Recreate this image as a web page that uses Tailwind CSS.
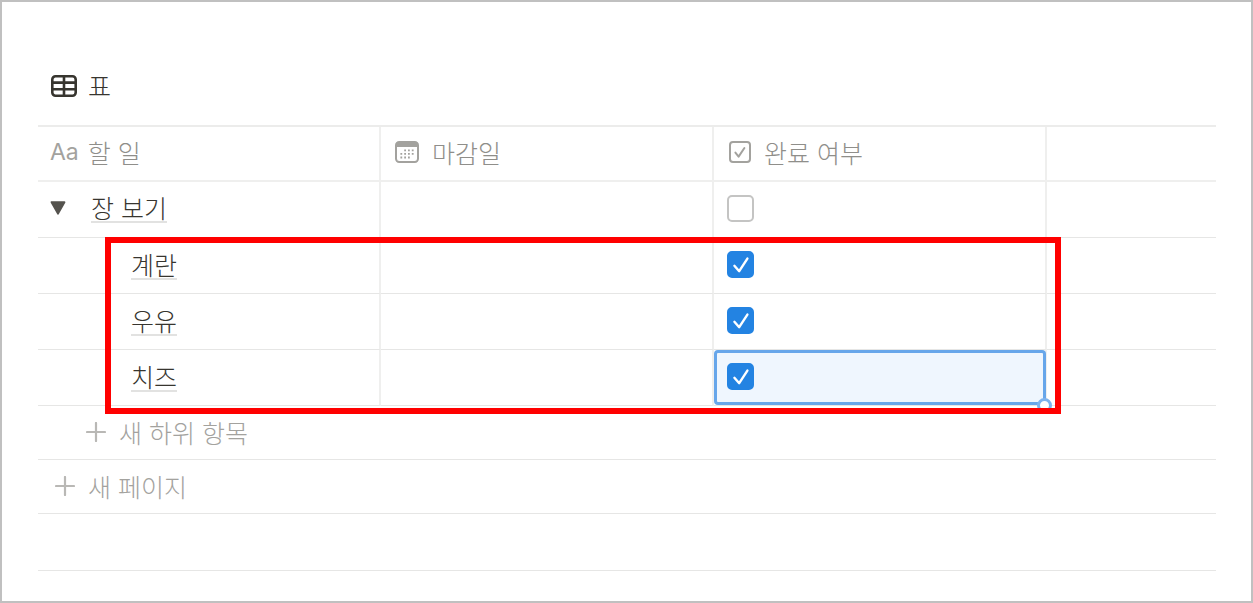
<!DOCTYPE html>
<html lang="ko">
<head>
    <meta charset="UTF-8">
    <meta name="viewport" content="width=device-width, initial-scale=1.0">
    <title>표</title>
    <script src="https://cdn.jsdelivr.net/npm/@tailwindcss/browser@4"></script>
</head>

<body class="bg-white font-['Noto_Sans_CJK_KR',sans-serif] text-[25px] leading-[28px] font-light text-[#37352f]">

    <main class="min-h-screen border-2 border-[#c0c0c0] pl-9 pr-[35px] pt-[69px] pb-6">

        <!--View title-->
        <div class="flex items-center gap-[11px] pl-[13px] h-[30px] mb-6">
            <svg class="w-[26px] h-[22px]" viewBox="0 0 26 22" fill="none" stroke="#37352f" stroke-width="2.6">
                <rect x="1.3" y="1.3" width="23.4" height="19.4" rx="3.2"/>
                <path d="M1 7.6h24M1 14.2h24M13 1v20"/>
            </svg>
            <h1 class="pb-0.5">표</h1>
        </div>

        <div class="relative">
            <table class="w-full table-fixed border-separate border-spacing-0 border-t-2 border-[#ececeb]">
                <colgroup>
                    <col class="w-[343px]">
                    <col class="w-[333px]">
                    <col class="w-[333px]">
                    <col>
                </colgroup>
                <thead class="text-left text-[#8f8e8a]">
                    <tr class="h-[55px]">
                        <th class="border-b-2 border-r-2 border-[#efefee] p-0 pb-[3px] pl-3 font-light">
                            <div class="flex items-center gap-[9px]">
                                <span class="font-[Inter,sans-serif] font-normal text-[23px] text-[#a3a29e]">Aa</span>할 일
                            </div>
                        </th>
                        <th class="border-b-2 border-r-2 border-[#efefee] p-0 pb-[3px] pl-[14px] font-light">
                            <div class="flex items-center gap-[13px]">
                                <svg class="w-6 h-[22px]" viewBox="0 0 24 22" fill="none">
                                    <rect x="1" y="1" width="22" height="20" rx="3.2" stroke="#a3a29e" stroke-width="2"/>
                                    <path d="M1 6V4a3 3 0 0 1 3-3h16a3 3 0 0 1 3 3v2z" fill="#a3a29e"/>
                                    <path d="M9.2 9.3h9.8M5.4 12.9h13.6M5.4 16.5h9.8" stroke="#a3a29e" stroke-width="1.8" stroke-dasharray="1.8 2"/>
                                </svg>
                                마감일
                            </div>
                        </th>
                        <th class="border-b-2 border-r-2 border-[#efefee] p-0 pb-[3px] pl-[15px] font-light">
                            <div class="flex items-center gap-[13px]">
                                <svg class="w-[22px] h-[22px]" viewBox="0 0 22 22" fill="none" stroke="#a3a29e" stroke-width="2" stroke-linecap="round" stroke-linejoin="round">
                                    <rect x="1" y="1" width="20" height="20" rx="3"/>
                                    <path d="M6.4 11.6l3.2 4 5.8-8.6"/>
                                </svg>
                                완료 여부
                            </div>
                        </th>
                        <th class="border-b-2 border-[#efefee] p-0"></th>
                    </tr>
                </thead>
                <tbody>
                    <!--Parent item-->
                    <tr class="h-14">
                        <td class="border-b border-r-2 border-b-[#e6e6e5] border-r-[#efefee] p-0 pb-[3px] pl-3">
                            <div class="flex items-center gap-[25px]">
                                <button type="button" aria-label="하위 항목">
                                    <svg class="w-4 h-[14px]" viewBox="0 0 16 14" fill="#55534e" stroke="#55534e" stroke-width="2" stroke-linejoin="round"><path d="M1.6 1.2h12.8L8 12.6z"/></svg>
                                </button>
                                <span class="border-b-2 border-[#e2e2e1]">장 보기</span>
                            </div>
                        </td>
                        <td class="border-b border-r-2 border-b-[#e6e6e5] border-r-[#efefee] p-0"></td>
                        <td class="border-b border-r-2 border-b-[#e6e6e5] border-r-[#efefee] p-0 pb-0.5 pl-[13px]">
                            <input type="checkbox" aria-label="장 보기 완료 여부" class="block appearance-none size-[27px] rounded-[5px] border-2 border-[#c4c4c3] bg-white">
                        </td>
                        <td class="border-b border-[#e6e6e5] p-0"></td>
                    </tr>
                    <!--Sub-items-->
                    <tr class="h-14">
                        <td class="border-b border-r-2 border-b-[#e6e6e5] border-r-[#efefee] p-0 pb-[5px] pl-[93px]">
                            <span class="inline-block align-middle border-b-2 border-[#e2e2e1]">계란</span>
                        </td>
                        <td class="border-b border-r-2 border-b-[#e6e6e5] border-r-[#efefee] p-0"></td>
                        <td class="border-b border-r-2 border-b-[#e6e6e5] border-r-[#efefee] p-0 pb-0.5 pl-[13px]">
                            <div class="grid w-[27px]">
                                <input type="checkbox" checked aria-label="계란 완료 여부" class="peer col-start-1 row-start-1 appearance-none size-[27px] rounded-[5px] border-2 border-[#c4c4c3] checked:border-[#2383e2] checked:bg-[#2383e2]">
                                <svg class="pointer-events-none invisible peer-checked:visible col-start-1 row-start-1 size-[27px]" viewBox="0 0 27 27" fill="none" stroke="#fff" stroke-width="2.4" stroke-linecap="round" stroke-linejoin="round"><path d="M7.4 14.8l4.8 5.4 8.2-12.6"/></svg>
                            </div>
                        </td>
                        <td class="border-b border-[#e6e6e5] p-0"></td>
                    </tr>
                    <tr class="h-14">
                        <td class="border-b border-r-2 border-b-[#e6e6e5] border-r-[#efefee] p-0 pb-[5px] pl-[93px]">
                            <span class="inline-block align-middle border-b-2 border-[#e2e2e1]">우유</span>
                        </td>
                        <td class="border-b border-r-2 border-b-[#e6e6e5] border-r-[#efefee] p-0"></td>
                        <td class="border-b border-r-2 border-b-[#e6e6e5] border-r-[#efefee] p-0 pb-0.5 pl-[13px]">
                            <div class="grid w-[27px]">
                                <input type="checkbox" checked aria-label="우유 완료 여부" class="peer col-start-1 row-start-1 appearance-none size-[27px] rounded-[5px] border-2 border-[#c4c4c3] checked:border-[#2383e2] checked:bg-[#2383e2]">
                                <svg class="pointer-events-none invisible peer-checked:visible col-start-1 row-start-1 size-[27px]" viewBox="0 0 27 27" fill="none" stroke="#fff" stroke-width="2.4" stroke-linecap="round" stroke-linejoin="round"><path d="M7.4 14.8l4.8 5.4 8.2-12.6"/></svg>
                            </div>
                        </td>
                        <td class="border-b border-[#e6e6e5] p-0"></td>
                    </tr>
                    <tr class="h-14">
                        <td class="border-b border-r-2 border-b-[#e6e6e5] border-r-[#efefee] p-0 pb-[5px] pl-[93px]">
                            <span class="inline-block align-middle border-b-2 border-[#e2e2e1]">치즈</span>
                        </td>
                        <td class="border-b border-r-2 border-b-[#e6e6e5] border-r-[#efefee] p-0"></td>
                        <!--Selected cell with its drag handle-->
                        <td class="relative border-b border-r-2 border-b-[#e6e6e5] border-r-[#efefee] p-0 pb-0.5 pl-[13px]">
                            <div class="absolute inset-y-0 left-0 -right-px rounded-[4px] border-[3px] border-[#67a6ea] bg-[#eff6fe]"></div>
                            <div class="absolute -right-[7px] -bottom-2 size-[15px] rounded-full border-[3px] border-[#7db3ee] bg-white"></div>
                            <div class="relative grid w-[27px]">
                                <input type="checkbox" checked aria-label="치즈 완료 여부" class="peer col-start-1 row-start-1 appearance-none size-[27px] rounded-[5px] border-2 border-[#c4c4c3] checked:border-[#2383e2] checked:bg-[#2383e2]">
                                <svg class="pointer-events-none invisible peer-checked:visible col-start-1 row-start-1 size-[27px]" viewBox="0 0 27 27" fill="none" stroke="#fff" stroke-width="2.4" stroke-linecap="round" stroke-linejoin="round"><path d="M7.4 14.8l4.8 5.4 8.2-12.6"/></svg>
                            </div>
                        </td>
                        <td class="border-b border-[#e6e6e5] p-0"></td>
                    </tr>
                </tbody>
            </table>

            <!--Red highlight around the sub-items-->
            <div class="pointer-events-none absolute left-[67px] right-[155px] top-28 h-[177px] border-6 border-[#ff0000]"></div>
        </div>

        <button type="button" class="flex w-full h-[54px] items-center gap-[13px] border-b border-[#e6e6e5] pb-0.5 pl-12 text-[#a3a29e]">
            <svg class="size-5" viewBox="0 0 20 20" fill="none" stroke="#b9b8b5" stroke-width="2.2" stroke-linecap="round"><path d="M10 1v18M1 10h18"/></svg>
            새 하위 항목
        </button>
        <button type="button" class="flex w-full h-[54px] items-center gap-[13px] border-b border-[#e6e6e5] pb-0.5 pl-[17px] text-[#a3a29e]">
            <svg class="size-5" viewBox="0 0 20 20" fill="none" stroke="#b9b8b5" stroke-width="2.2" stroke-linecap="round"><path d="M10 1v18M1 10h18"/></svg>
            새 페이지
        </button>
        <div class="h-[57px] border-b border-[#e6e6e5]"></div>

    </main>
</body>
</html>
